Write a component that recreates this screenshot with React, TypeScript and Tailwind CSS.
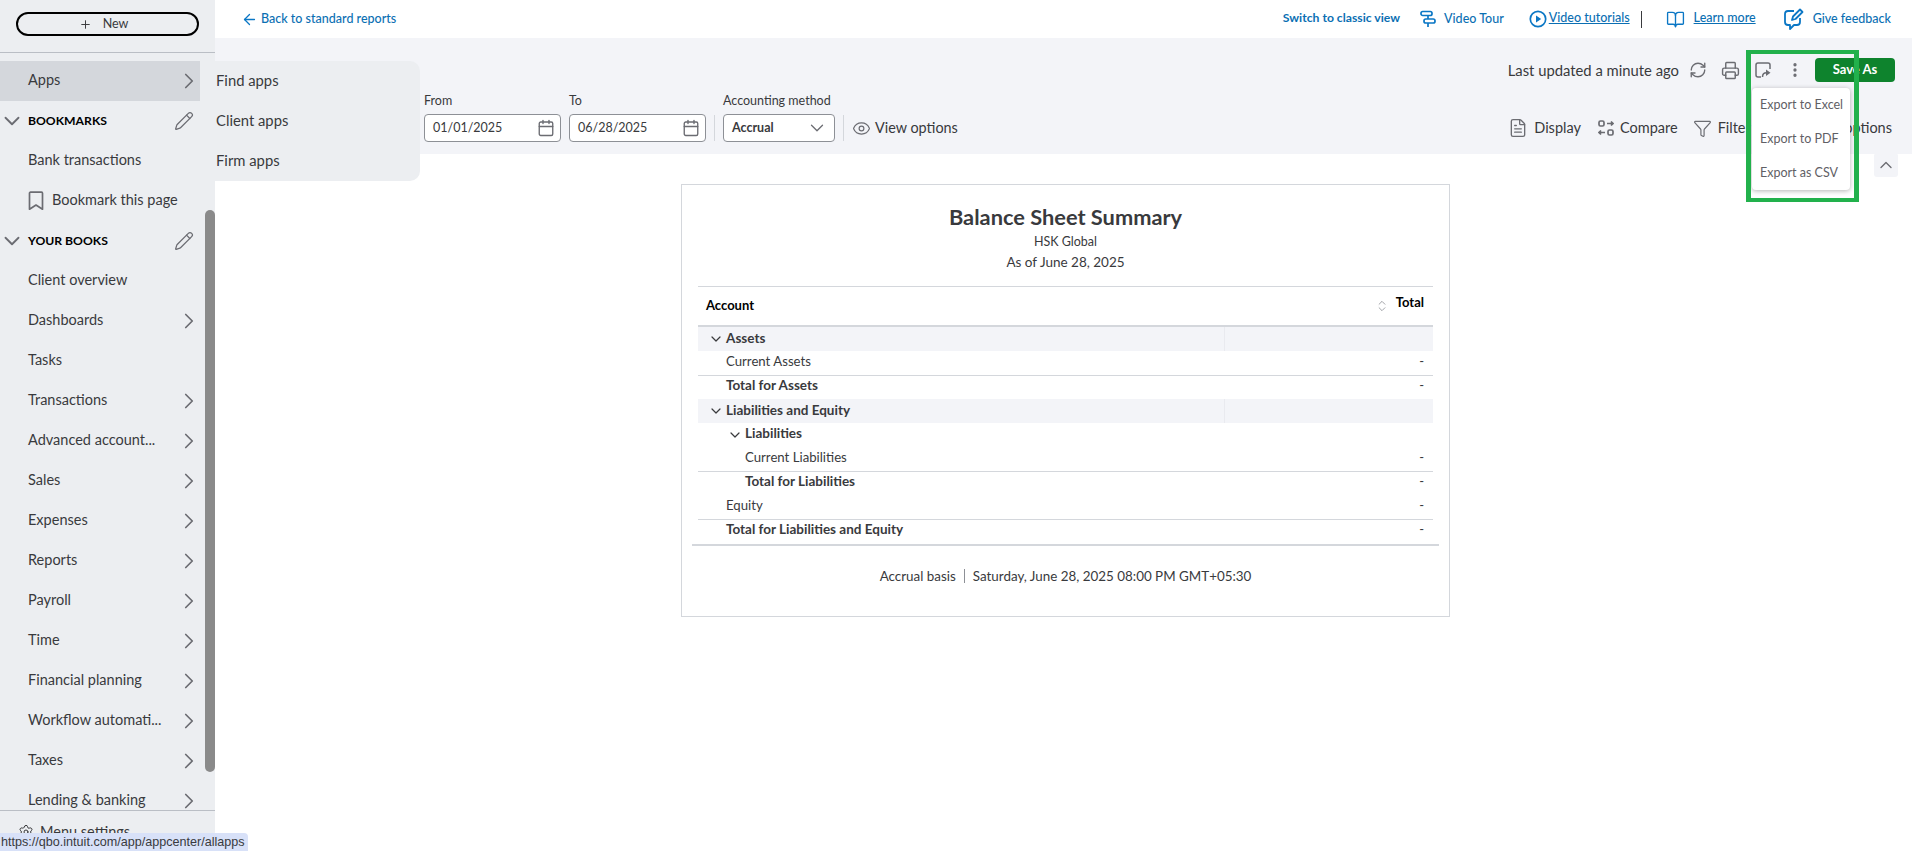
import React from "react";
import { ChevronRight, ChevronDown, ChevronUp, Pencil, Calendar, Eye, RefreshCw, Printer, EllipsisVertical, FileText, Funnel, Settings, ArrowLeft, BookOpen, Plus, ChevronsUpDown } from "lucide-react";

const font = "font-['Lato','Noto_Sans',sans-serif]";

function NavRow({ label, arrow = true }: { label: string; arrow?: boolean }) {
  return (
    <div className="flex h-10 items-center justify-between pl-7 text-[14.5px] text-[#393a3d]">
      <span className="pb-[2px]">{label}</span>
      {arrow && <ChevronRight size={26} strokeWidth={1.6} className="-mr-[2px] text-[#6b6c72]" />}
    </div>
  );
}

function SectionRow({ label }: { label: string }) {
  return (
    <div className="flex h-10 items-center justify-between pr-[6px] text-[12.2px] font-bold text-black">
      <span className="flex items-center">
        <ChevronDown size={26} strokeWidth={1.7} className="-ml-[1px] mr-[3px] text-[#6b6c72]" />
        {label}
      </span>
      <Pencil size={20} strokeWidth={1.5} className="text-[#6b6c72]" />
    </div>
  );
}

function DateInput({ value }: { value: string }) {
  return (
    <div className="flex h-7 w-[137px] items-center justify-between rounded-[4px] border border-[#8d9096] bg-white pl-2 pr-[5px] text-[12.5px] text-[#393a3d]">
      <span>{value}</span>
      <Calendar size={18} strokeWidth={1.8} className="text-[#6b6c72]" />
    </div>
  );
}

function Row({ label, indent, height, bold, band, chevron, line, dash = true, lift = "pb-[2px]" }: { label: string; indent: string; height: string; bold?: boolean; band?: boolean; chevron?: boolean; line?: boolean; dash?: boolean; lift?: string }) {
  return (
    <div className={`flex items-center text-[#393a3d] ${height} ${band ? "bg-[#f3f4f8]" : ""} ${line ? "border-b border-[#d4d7dc]" : ""} ${bold ? "text-[13.5px] font-bold" : "text-[13.2px]"}`}>
      <div className={`flex h-full w-[527px] items-center ${indent} ${band ? "border-r border-[#e9eaef]" : ""}`}>
        {chevron && <ChevronDown size={16} strokeWidth={1.8} className="-ml-[18px] mr-[2px] text-[#393a3d]" />}
        <span className={lift}>{label}</span>
      </div>
      <div className={`flex-1 pr-[9px] text-right text-[13px] font-normal ${lift}`}>{dash ? "-" : ""}</div>
    </div>
  );
}

export default function App() {
  return (
    <div className={`relative flex h-[851px] w-full overflow-hidden bg-white ${font}`}>
      <aside className="relative flex h-full w-[215px] shrink-0 flex-col overflow-hidden bg-[#eceef1]">
        <div className="flex h-[53px] shrink-0 items-start border-b border-[#babec5] px-4 pt-3">
          <div className="flex h-6 w-[183px] items-center justify-center gap-[11px] rounded-full border-2 border-black pr-[8px] text-[12.5px] text-[#393a3d]">
            <Plus size={13} strokeWidth={1.8} />
            <span>New</span>
          </div>
        </div>
        <div className="mt-2 flex-1 overflow-hidden">
          <div className="w-[200px] bg-[#d4d7dc]">
            <NavRow label="Apps" />
          </div>
          <div className="w-[200px]">
            <SectionRow label="BOOKMARKS" />
            <NavRow label="Bank transactions" arrow={false} />
            <div className="flex h-10 items-center gap-[8px] pl-7 text-[14.5px] text-[#393a3d]">
              <svg width="16" height="20" viewBox="0 0 16 20" fill="none" stroke="#6b6c72" strokeWidth="1.7" strokeLinejoin="round">
                <path d="M1.5 2.2a1 1 0 0 1 1-1h11a1 1 0 0 1 1 1v16L8 14l-6.5 4.2z" />
              </svg>
              <span className="pb-[2px]">Bookmark this page</span>
            </div>
            <SectionRow label="YOUR BOOKS" />
            <NavRow label="Client overview" arrow={false} />
            <NavRow label="Dashboards" />
            <NavRow label="Tasks" arrow={false} />
            <NavRow label="Transactions" />
            <NavRow label="Advanced account..." />
            <NavRow label="Sales" />
            <NavRow label="Expenses" />
            <NavRow label="Reports" />
            <NavRow label="Payroll" />
            <NavRow label="Time" />
            <NavRow label="Financial planning" />
            <NavRow label="Workflow automati..." />
            <NavRow label="Taxes" />
            <NavRow label="Lending & banking" />
          </div>
        </div>
        <div className="flex h-[41px] shrink-0 items-start gap-[6px] border-t border-[#babec5] pl-[18px] pt-[11px] text-[14.5px] leading-5 text-[#393a3d]">
          <Settings size={16} strokeWidth={1.5} className="mt-[2px]" />
          <span>Menu settings</span>
        </div>
        <div className="absolute left-[205px] top-[210px] h-[562px] w-[10px] rounded-[5px] bg-[#8a8a8a]" />
      </aside>

      <main className="flex min-w-0 flex-1 flex-col">
        <header className="flex h-[38px] shrink-0 items-center justify-between pl-[26px] pr-[21px] text-[12.5px] text-[#0b6fb3]">
          <div className="mt-[1px] flex items-center gap-[3px] font-medium">
            <ArrowLeft size={17} strokeWidth={1.8} className="text-[#0b77c5]" />
            <span>Back to standard reports</span>
          </div>
          <div className="flex items-center">
            <span className="-mt-[1px] text-[12.2px] font-bold">Switch to classic view</span>
            <svg width="16" height="18" viewBox="0 0 16 18" fill="none" stroke="#0b77c5" strokeWidth="1.7" className="ml-5">
              <rect x="1" y="1.5" width="11" height="4" rx="1.8" />
              <rect x="4" y="9" width="11" height="4" rx="1.8" />
              <path d="M8 5.5V9M8 13v4" />
            </svg>
            <span className="ml-[8px] font-medium">Video Tour</span>
            <svg width="18" height="18" viewBox="0 0 18 18" fill="none" className="ml-[25px]">
              <circle cx="9" cy="9" r="7.7" stroke="#0b77c5" strokeWidth="1.7" />
              <path d="M7 5.5v7l5.2-3.5z" fill="#0b77c5" />
            </svg>
            <span className="-mt-[1px] ml-[2px] font-medium underline">Video tutorials</span>
            <span className="ml-[11px] h-[17px] w-px bg-[#393a3d]" />
            <BookOpen size={19} strokeWidth={1.7} className="ml-[24px] text-[#0b77c5]" />
            <span className="-mt-[1px] ml-[9px] font-medium underline">Learn more</span>
            <svg width="20" height="22" viewBox="0 0 20 22" fill="none" stroke="#0b77c5" strokeWidth="1.8" className="ml-[28px]">
              <path d="M10 3H4a3 3 0 0 0-3 3v8a3 3 0 0 0 3 3h2v4l4-4h3a3 3 0 0 0 3-3v-4" strokeLinejoin="round" />
              <path d="M8 12l1-3.5L16 1.5 18.5 4l-7 7z" strokeLinejoin="round" />
            </svg>
            <span className="mt-[1px] ml-[9px] font-medium">Give feedback</span>
          </div>
        </header>

        <section className="h-[116px] shrink-0 bg-[#f3f4f8] pl-[209px] pr-[17px] pt-5">
          <div className="flex h-6 items-center justify-end text-[14.8px] text-[#393a3d]">
            <span>Last updated a minute ago</span>
            <RefreshCw size={18} strokeWidth={1.8} className="ml-[10px] text-[#6b6c72]" />
            <Printer size={19} strokeWidth={1.8} className="ml-[14px] text-[#6b6c72]" />
            <svg width="16" height="16" viewBox="0 0 16 16" fill="none" stroke="#6b6c72" strokeWidth="1.5" className="ml-[15px]">
              <path d="M6 15H3a2 2 0 0 1-2-2V3a2 2 0 0 1 2-2h10a2 2 0 0 1 2 2v4" />
              <path d="M7.5 15c0-2.6 1.6-4.2 4-4.2" />
              <path d="M11 7.5l4.5 3.3L11 14z" fill="#6b6c72" stroke="none" />
            </svg>
            <EllipsisVertical size={18} strokeWidth={2.4} className="ml-[15px] text-[#6b6c72]" />
            <div className="ml-[11px] flex h-6 w-20 items-center justify-center rounded-[4px] bg-[#0e832d] text-[13px] font-bold text-white">Save As</div>
          </div>
          <div className="mt-[11px] flex items-end justify-between">
            <div className="flex items-end">
              <div className="flex flex-col gap-[5px] text-[12.5px] text-[#393a3d]">
                <span className="leading-4">From</span>
                <DateInput value="01/01/2025" />
              </div>
              <div className="ml-2 flex flex-col gap-[5px] text-[12.5px] text-[#393a3d]">
                <span className="leading-4">To</span>
                <DateInput value="06/28/2025" />
              </div>
              <div className="mx-2 mb-[1px] h-[26px] w-px bg-[#d4d7dc]" />
              <div className="flex flex-col gap-[5px] text-[12.5px] text-[#393a3d]">
                <span className="leading-4">Accounting method</span>
                <div className="flex h-7 w-[112px] items-center justify-between rounded-[4px] border border-[#8d9096] bg-white pl-2 pr-[6px] text-[12.5px] font-bold">
                  <span>Accrual</span>
                  <ChevronDown size={22} strokeWidth={1.4} className="text-[#6b6c72]" />
                </div>
              </div>
              <div className="mx-2 mb-[1px] h-[26px] w-px bg-[#d4d7dc]" />
              <div className="flex h-7 items-center gap-[4px] text-[14.4px] text-[#393a3d]">
                <Eye size={19} strokeWidth={1.5} className="text-[#6b6c72]" />
                <span>View options</span>
              </div>
            </div>
            <div className="mr-[3px] flex h-7 items-center text-[14.5px] text-[#393a3d]">
              <FileText size={20} strokeWidth={1.6} className="text-[#6b6c72]" />
              <span className="ml-[6px]">Display</span>
              <svg width="16" height="16" viewBox="0 0 16 16" fill="none" stroke="#6b6c72" strokeWidth="1.7" className="ml-[17px]">
                <rect x="1" y="1" width="5" height="5" rx="1.5" />
                <rect x="10" y="10" width="5" height="5" rx="1.5" />
                <path d="M9 3.5h6M13 1.5l2 2-2 2M7 12.5H1M3 10.5l-2 2 2 2" />
              </svg>
              <span className="ml-[6px]">Compare</span>
              <Funnel size={19} strokeWidth={1.5} className="ml-[15px] text-[#6b6c72]" />
              <span className="ml-[6px]">Filter</span>
              <span className="ml-[40px]">General options</span>
            </div>
          </div>
        </section>

        <div className="relative flex-1">
          <article className="ml-[466px] mt-[30px] h-[433px] w-[769px] border border-[#d4d7dc] px-[16px] pt-[20px]">
            <div className="text-center text-[#393a3d]">
              <h1 className="text-[21.8px] font-bold leading-6">Balance Sheet Summary</h1>
              <p className="mt-[3px] text-[12.5px] leading-[20px]">HSK Global</p>
              <p className="text-[13.5px] leading-[20px]">As of June 28, 2025</p>
            </div>
            <div className="mt-[14px] flex h-[41px] items-center justify-between border-y border-b-2 border-[#d4d7dc] text-[13px] font-bold text-black">
              <span className="pl-2">Account</span>
              <span className="-mt-[7px] flex items-center gap-[7px] pr-[9px]">
                <ChevronsUpDown size={14} strokeWidth={1.4} className="mt-[7px] text-[#8d9096]" />
                Total
              </span>
            </div>
            <Row label="Assets" indent="pl-7" height="h-6" band chevron bold dash={false} />
            <Row label="Current Assets" indent="pl-7" height="h-[25px]" line />
            <Row label="Total for Assets" indent="pl-7" height="h-[23px]" bold lift="pb-[4px]" />
            <Row label="Liabilities and Equity" indent="pl-7" height="h-6" band chevron bold dash={false} />
            <Row label="Liabilities" indent="pl-[47px]" height="h-6" chevron bold dash={false} lift="pb-[4px]" />
            <Row label="Current Liabilities" indent="pl-[47px]" height="h-[25px]" line />
            <Row label="Total for Liabilities" indent="pl-[47px]" height="h-[23px]" bold lift="pb-[4px]" />
            <Row label="Equity" indent="pl-7" height="h-[25px]" line />
            <Row label="Total for Liabilities and Equity" indent="pl-7" height="h-6" bold lift="pb-[5px]" />
            <div className="-mx-[6px] h-[2px] bg-[#d4d7dc]" />
            <div className="mt-[20px] flex items-center justify-center gap-[8px] text-[13.4px] leading-5 text-[#393a3d]">
              <span>Accrual basis</span>
              <span className="h-[14px] w-px bg-[#8d9096]" />
              <span>Saturday, June 28, 2025 08:00 PM GMT+05:30</span>
            </div>
          </article>
          <div className="absolute right-[14px] top-[-1px] flex h-6 w-6 items-center justify-center rounded-[3px] bg-[#f3f4f8]">
            <ChevronUp size={20} strokeWidth={1.6} className="text-[#6b6c72]" />
          </div>
        </div>
      </main>

      <div className="absolute left-[215px] top-[61px] flex h-[120px] w-[205px] flex-col rounded-r-[10px] bg-[#eceef1] text-[14.8px] text-[#393a3d]">
        <div className="flex h-10 items-center pb-[2px] pl-[1px]">Find apps</div>
        <div className="flex h-10 items-center pb-[2px] pl-[1px]">Client apps</div>
        <div className="flex h-10 items-center pb-[2px] pl-[1px]">Firm apps</div>
      </div>

      <div className="absolute left-[1752px] top-[88px] flex h-[102px] w-[98px] flex-col rounded-[4px] bg-white pl-[8px] text-[12.5px] text-[#5f6065] shadow-[0_1px_5px_rgba(0,0,0,0.3)]">
        <div className="flex h-[34px] items-center">Export to Excel</div>
        <div className="flex h-[34px] items-center">Export to PDF</div>
        <div className="flex h-[34px] items-center">Export as CSV</div>
      </div>

      <div className="absolute left-[1746px] top-[50px] h-[152px] w-[113px] border-x-[5px] border-y-4 border-[#22b14c]" />

      <div className="absolute bottom-0 left-0 flex h-[18px] w-[248px] items-center rounded-tr-[4px] bg-[#d8e1f8] pl-[1px] font-['Liberation_Sans',sans-serif] text-[12.6px] text-[#393a3d]">
        https://qbo.intuit.com/app/appcenter/allapps
      </div>
    </div>
  );
}
